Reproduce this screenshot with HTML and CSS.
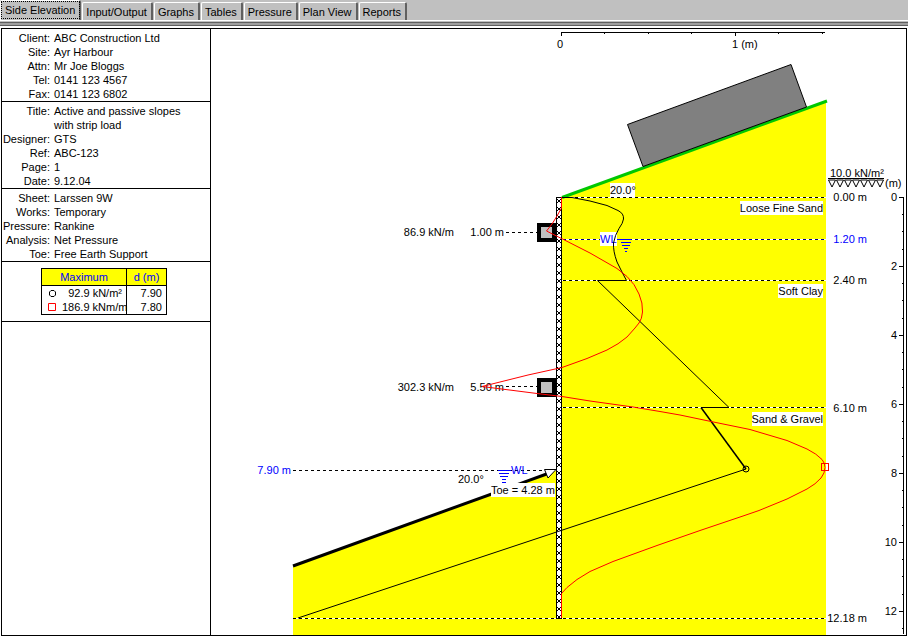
FILE: index.html
```html
<!DOCTYPE html>
<html lang="en">
<head>
<meta charset="utf-8">
<title>Side Elevation</title>
<link rel="stylesheet" href="styles.css">
</head>
<body>
<nav class="tabs">
  <button type="button" class="tab tab-active">Side Elevation</button>
  <button type="button" class="tab">Input/Output</button>
  <button type="button" class="tab">Graphs</button>
  <button type="button" class="tab">Tables</button>
  <button type="button" class="tab">Pressure</button>
  <button type="button" class="tab">Plan View</button>
  <button type="button" class="tab">Reports</button>
</nav>
<div class="groove"></div>
<main class="sheet">
  <aside class="info">
    <dl class="block">
      <dt>Client:</dt><dd>ABC Construction Ltd</dd>
      <dt>Site:</dt><dd>Ayr Harbour</dd>
      <dt>Attn:</dt><dd>Mr Joe Bloggs</dd>
      <dt>Tel:</dt><dd>0141 123 4567</dd>
      <dt>Fax:</dt><dd>0141 123 6802</dd>
    </dl>
    <dl class="block">
      <dt>Title:</dt><dd>Active and passive slopes<br>with strip load</dd>
      <dt>Designer:</dt><dd>GTS</dd>
      <dt>Ref:</dt><dd>ABC-123</dd>
      <dt>Page:</dt><dd>1</dd>
      <dt>Date:</dt><dd>9.12.04</dd>
    </dl>
    <dl class="block">
      <dt>Sheet:</dt><dd>Larssen 9W</dd>
      <dt>Works:</dt><dd>Temporary</dd>
      <dt>Pressure:</dt><dd>Rankine</dd>
      <dt>Analysis:</dt><dd>Net Pressure</dd>
      <dt>Toe:</dt><dd>Free Earth Support</dd>
    </dl>
    <div class="block-max">
      <table class="max">
        <colgroup><col class="col-mark"><col><col class="col-depth"></colgroup>
        <thead>
          <tr><th scope="col" colspan="2">Maximum</th><th scope="col" class="depth">d (m)</th></tr>
        </thead>
        <tbody>
          <tr>
            <td class="mark"><svg width="9" height="9" viewBox="0 0 9 9"><path d="M3 1.5h3L7.500 3v3L6 7.500H3L1.500 6V3z" fill="none" stroke="#000"/></svg></td>
            <td class="val">92.9 kN/m²</td><td class="depth">7.90</td>
          </tr>
          <tr>
            <td class="mark"><svg width="9" height="9" viewBox="0 0 9 9"><path d="M.5.5h7v7h-7z" fill="none" stroke="#f00"/></svg></td>
            <td class="val val-wide">186.9 kNm/m</td><td class="depth">7.80</td>
          </tr>
        </tbody>
      </table>
    </div>
  </aside>
  <section class="drawing">
    <svg class="plot" viewBox="211 29 695 606" role="img" aria-label="Side elevation">
      <defs>
        <pattern id="pile" x="557" y="197" width="4" height="8" patternUnits="userSpaceOnUse">
          <path d="M0 0h4v8h-4z" fill="#fff"/>
          <path d="M1 3h2v2h-2zM0 2h1v1h-1zM3 2h1v1h-1zM0 5h1v1h-1zM3 5h1v1h-1z" fill="#000"/>
        </pattern>
      </defs>

      <path class="soil" d="M562 197L826 101V635H556V470L562 468zM293 566L557 470V635H293z"/>

      <!-- strip load and retained slope -->
      <path class="ground-active" d="M562 197.500L827 101"/>
      <path class="strip" d="M627.500 124.500L791 64.500L806.500 107L643 166.500z"/>

      <!-- stratum and water levels -->
      <g class="dash-base">
        <path d="M562 197.500H826M562 239.500H826M562 280.500H826M562 407.500H826M293 618.500H826"/>
      </g>
      <g class="dash">
        <path d="M563 197.500H826M563 280.500H826M563 407.500H826M293 618.500H826M293 470.500H550M506 232.500H538M506 386.500H538"/>
        <path class="dash-water" d="M563 239.500H826"/>
      </g>

      <!-- sheet pile -->
      <path fill="url(#pile)" shape-rendering="crispEdges" d="M557 197h4v421h-4z"/>
      <path class="line crisp" d="M556.500 197.500V618.500H561.500V197.500z"/>

      <!-- passive slope -->
      <path class="ground-passive" d="M293 566L548 473.500"/>
      <path d="M544.500 469.500H556L548 478z" fill="#fff" stroke="#000"/>

      <!-- props -->
      <g class="crisp">
        <path d="M537 223h20v19h-20zM537 378h20v19h-20z" fill="#000"/>
        <path d="M541 227h11v11h-11zM541 382h11v11h-11z" fill="#c0c0c0"/>
      </g>

      <!-- label plates -->
      <path class="crisp" fill="#fff" d="M610 183h25v14h-25zM740 201h83v14h-83zM778 284h45v14h-45zM752 412h71v14h-71zM600 232h17v14h-17zM491 483h64v14h-64z"/>

      <g class="text">
        <text x="557" y="48">0</text>
        <text x="732" y="48">1 (m)</text>
        <text x="610" y="194">20.0°</text>
        <text x="823" y="212" text-anchor="end">Loose Fine Sand</text>
        <text x="823" y="295" text-anchor="end">Soft Clay</text>
        <text x="823" y="423" text-anchor="end">Sand &amp; Gravel</text>
        <text x="830" y="177">10.0 kN/m²</text>
        <text x="885" y="187">(m)</text>
        <text x="867" y="201" text-anchor="end">0.00 m</text>
        <text class="water" x="867" y="243" text-anchor="end">1.20 m</text>
        <text x="867" y="284" text-anchor="end">2.40 m</text>
        <text x="867" y="412" text-anchor="end">6.10 m</text>
        <text x="867" y="622" text-anchor="end">12.18 m</text>
        <text x="454" y="236" text-anchor="end">86.9 kN/m</text>
        <text x="504" y="236" text-anchor="end">1.00 m</text>
        <text x="454" y="391" text-anchor="end">302.3 kN/m</text>
        <text x="504" y="391" text-anchor="end">5.50 m</text>
        <text class="water" x="291" y="474" text-anchor="end">7.90 m</text>
        <text class="water" x="600" y="243">WL</text>
        <text class="water" x="511" y="474">WL</text>
        <text x="458" y="483">20.0°</text>
        <text x="491" y="494">Toe = 4.28 m</text>
        <text x="897" y="201" text-anchor="end">0</text>
        <text x="897" y="270" text-anchor="end">2</text>
        <text x="897" y="339" text-anchor="end">4</text>
        <text x="897" y="408" text-anchor="end">6</text>
        <text x="897" y="477" text-anchor="end">8</text>
        <text x="897" y="546" text-anchor="end">10</text>
        <text x="897" y="615" text-anchor="end">12</text>
      </g>

      <!-- water symbols -->
      <path class="water-mark" d="M617 239.500H631M621 242.500H631M622 245.500H630M624 248.500H628M625 251.500H627"/>
      <path class="water-mark" d="M498 470.500H511M499 473.500H509M500 476.500H508M502 479.500H506M502 482.500H506"/>

      <!-- surcharge -->
      <path class="line crisp" d="M828 178.500H884"/>
      <path class="line" d="M828.500 180L832 187L835.500 180zM836.500 180L840 187L843.500 180zM844.500 180L848 187L851.500 180zM852.500 180L856 187L859.500 180zM860.500 180L864 187L867.500 180zM868.500 180L872 187L875.500 180zM876.500 180L880 187L883.500 180z"/>

      <!-- scales -->
      <path class="line crisp" d="M561.500 36V32.500H825M735.500 32V36M604.500 33V34M648.500 33V34M691.500 33V34M778.500 33V34M822.500 33V34"/>
      <path class="line crisp" d="M903.500 197V634M899 197.500H904M899 266.500H904M899 335.500H904M899 404.500H904M899 473.500H904M899 542.500H904M899 611.500H904"/>
      <path class="line crisp" d="M902 214.500h2M902 231.500h2M902 249.500h2M902 283.500h2M902 300.500h2M902 318.500h2M902 352.500h2M902 369.500h2M902 387.500h2M902 421.500h2M902 438.500h2M902 456.500h2M902 490.500h2M902 507.500h2M902 525.500h2M902 559.500h2M902 576.500h2M902 594.500h2M902 628.500h2"/>

      <!-- net pressure -->
      <path class="line" d="M562 197.500H572L590 201L607 205.500L618 210.500Q624 213.500 623.500 219Q623 223 619 228.500Q615 235 613.500 243Q613 251 617 262L622.500 273L626.500 280.500H597.500L729 407.500H701"/>
      <path class="line" stroke-width="1.500" d="M701 407.500L746 469"/>
      <path class="line" d="M746 469L298 618"/>
      <circle class="line" cx="746" cy="469" r="3"/>

      <!-- bending moment -->
      <path class="moment" d="M561.500 197V208L557 216L552 224L546.500 231L561.500 238.500L590 253L617 268.500L627 276.500Q635 284 639 294Q643 303 642.500 312Q642 319 639 323L635 328L627 337Q619 344 607 350L587 358.500L562 367.500L528 375L482 386.500L537 393.500L562 396.500L590 401L633 407L660 411.500L680 415L711 421.500L750 429.500L787 440.500L807 449Q817 454 822 459.500Q825 463 825 467.500Q825 473 821 478Q816 484 807 489L787 499L759 510.500L743 516L700 530.500L657 545.500L613 561.500L590 571.500L577 579.500L567 587.500L561.500 593.500V618"/>
      <path class="moment crisp" d="M821.500 463.500h7v7h-7z"/>
    </svg>
  </section>
</main>
</body>
</html>
```
FILE: styles.css
```css
body {
  margin: 0;
  background: #fff;
  color: #000;
  font: 11px/14px "Liberation Sans", Arial, sans-serif;
}

.tabs {
  display: flex;
  align-items: flex-end;
  gap: 1px;
  height: 20px;
  background: #c0c0c0;
}

.tab {
  box-sizing: border-box;
  height: 18px;
  margin: 0;
  padding: 1px 4px 0 3px;
  border: 1px solid #fff;
  border-right: 2px solid #606060;
  border-bottom: 0;
  border-radius: 2px 2px 0 0;
  background: #c0c0c0;
  color: #000;
  font: 11px/16px "Liberation Sans", Arial, sans-serif;
  white-space: nowrap;
}

.tab-active {
  height: 20px;
  padding: 0 4px 2px;
  outline: 1px dotted #000;
  outline-offset: -2px;
}

.groove {
  box-sizing: border-box;
  height: 6px;
  border-top: 1px solid #fff;
  border-bottom: 1px solid #606060;
  background: linear-gradient(#c0c0c0 1px, #606060 1px 2px, #a0a0a0 2px);
}

.sheet {
  display: grid;
  grid-template-columns: 209px 1fr;
  margin: 2px 1px 0;
  border: 1px solid #000;
}

.info {
  border-right: 1px solid #000;
}

.block {
  display: grid;
  grid-template-columns: 48px 1fr;
  column-gap: 4px;
  margin: 0;
  padding-top: 2px;
  border-bottom: 1px solid #000;
}

.block dt {
  text-align: right;
}

.block dd {
  margin: 0;
}

.block-max {
  padding: 6px 39px;
  border-bottom: 1px solid #000;
}

.max {
  width: 126px;
  border: 1px solid #000;
  border-spacing: 0;
  table-layout: fixed;
}

.col-mark {
  width: 20px;
}

.col-depth {
  width: 40px;
}

.max th,
.max td {
  padding: 0;
}

.max th {
  height: 16px;
  border-bottom: 1px solid #000;
  background: #ff0;
  color: #00f;
  font-weight: normal;
  text-align: center;
}

.max td {
  height: 14px;
  text-align: right;
  white-space: nowrap;
}

.max .mark {
  line-height: 0;
  text-align: center;
}

.max .val {
  padding-right: 4px;
}

.max .val-wide {
  padding-right: 0;
}

.max .depth {
  border-left: 1px solid #000;
}

.max td.depth {
  padding-right: 4px;
}

.drawing {
  min-width: 0;
}

.plot {
  display: block;
  width: 100%;
  height: auto;
}

.soil {
  fill: #ff0;
}

.ground-active {
  fill: none;
  stroke: #00c800;
  stroke-width: 3px;
}

.ground-passive {
  fill: none;
  stroke: #000;
  stroke-width: 3px;
}

.strip {
  fill: #808080;
  stroke: #000;
}

.crisp,
.dash,
.dash-base,
.soil,
.water-mark {
  shape-rendering: crispEdges;
}

.dash-base {
  stroke: #fff;
}

.dash {
  stroke: #000;
  stroke-dasharray: 3 3;
}

.dash-water {
  stroke: #000080;
}

.line {
  fill: none;
  stroke: #000;
}

.moment {
  fill: none;
  stroke: #f00;
}

.water-mark {
  stroke: #00f;
}

.text {
  font: 11px "Liberation Sans", Arial, sans-serif;
}

.water {
  fill: #00f;
}
```
